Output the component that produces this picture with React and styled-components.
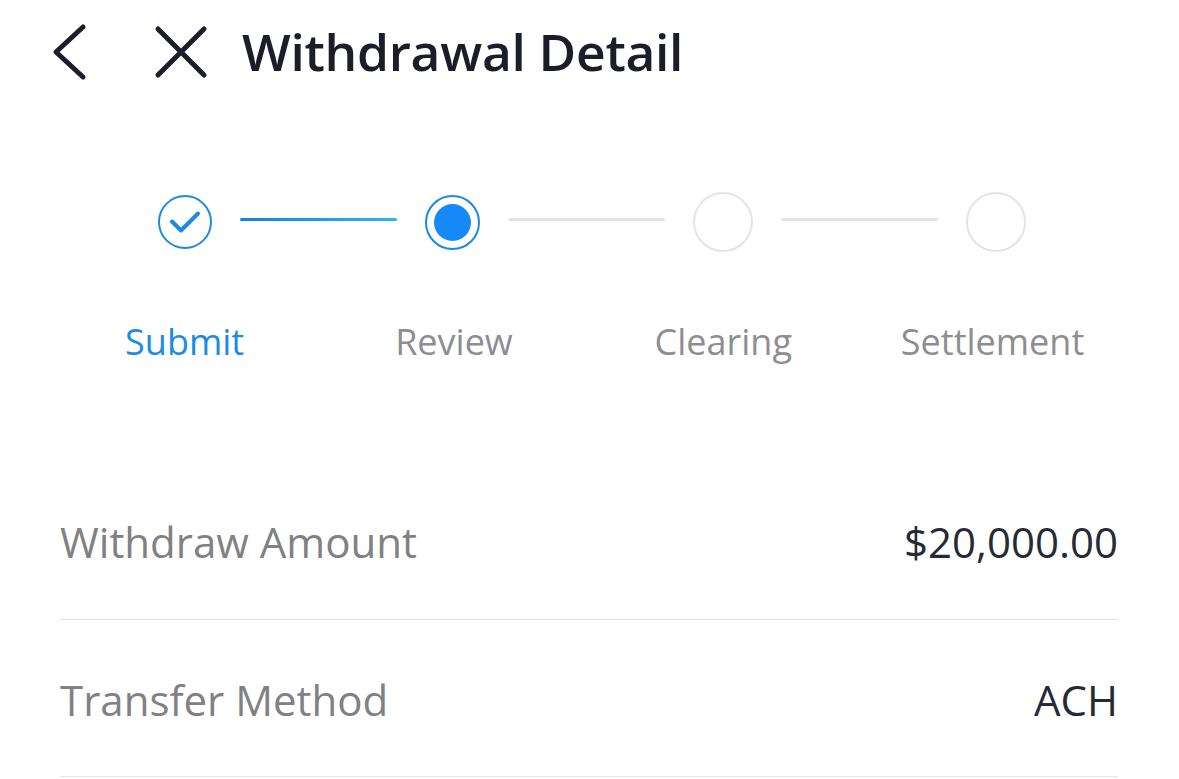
import React from 'react';
import styled, { createGlobalStyle } from 'styled-components';

const GlobalStyle = createGlobalStyle`
  html, body {
    margin: 0;
    padding: 0;
    background: #fff;
  }
  body {
    font-family: "Open Sans", "Noto Sans", sans-serif;
    -webkit-font-smoothing: antialiased;
  }
`;

const Page = styled.div`
  width: 1179px;
  height: 779px;
  overflow: hidden;
  background: #fff;
`;

const Header = styled.header`
  display: flex;
  align-items: center;
  height: 104px;
  padding-left: 51px;
`;

const IconButton = styled.button`
  display: flex;
  align-items: center;
  justify-content: center;
  padding: 0;
  margin: 0 ${(p) => p.gap}px 0 0;
  border: none;
  background: none;
  color: #1b1e29;
`;

const Title = styled.h1`
  margin: 0;
  font-size: 51.5px;
  font-weight: 600;
  line-height: 1.2;
  color: #1b1e29;
  letter-spacing: -0.3px;
`;

const Track = styled.div`
  display: flex;
  align-items: center;
  height: 60px;
  margin-top: 88px;
  padding-left: 158px;
`;

const Circle = styled.div`
  box-sizing: border-box;
  flex: none;
  display: flex;
  align-items: center;
  justify-content: center;
  width: ${(p) => p.size}px;
  height: ${(p) => p.size}px;
  border-radius: 50%;
  border: 2.5px solid ${(p) => (p.state === 'todo' ? '#e3e3ec' : '#1e88e5')};
  background: #fff;
`;

const Dot = styled.div`
  width: 37px;
  height: 37px;
  border-radius: 50%;
  background: #1489f7;
`;

const Connector = styled.div`
  flex: none;
  width: 157px;
  height: 3px;
  margin: 0 28px 5px;
  border-radius: 2px;
  background: ${(p) =>
    p.done ? 'linear-gradient(90deg, #1a7fdf, #2bb7e9)' : '#e2e2ec'};
`;

const Labels = styled.div`
  display: grid;
  grid-template-columns: repeat(4, 269.3px);
  margin-top: 68px;
  padding-left: 50px;
`;

const Label = styled.div`
  text-align: center;
  font-size: 36px;
  line-height: 1.2;
  color: ${(p) => (p.active ? '#1a8ce6' : '#8e8e92')};
`;

const List = styled.div`
  margin: 99px 61px 0 60px;
`;

const Row = styled.div`
  display: flex;
  justify-content: space-between;
  align-items: baseline;
  padding: 55px 0 51px;
  border-bottom: 1.5px solid #e4e4ea;
  font-size: 42px;
  line-height: 1.2;
`;

const RowLabel = styled.span`
  color: #818185;
`;

const RowValue = styled.span`
  color: #262a36;
`;

const BackIcon = () => (
  <svg width="36" height="58" viewBox="0 0 36 58" fill="none">
    <path
      d="M32 4 L5 29 L32 54"
      stroke="currentColor"
      strokeWidth="5"
      strokeLinecap="round"
      strokeLinejoin="round"
    />
  </svg>
);

const CloseIcon = () => (
  <svg width="56" height="56" viewBox="0 0 56 56" fill="none">
    <path
      d="M5 5 L51 51 M51 5 L5 51"
      stroke="currentColor"
      strokeWidth="5"
      strokeLinecap="round"
    />
  </svg>
);

const CheckIcon = () => (
  <svg width="32" height="24" viewBox="0 0 32 24" fill="none">
    <path
      d="M3 11.5 L12 20.5 L29 3.5"
      stroke="#1e88e5"
      strokeWidth="4"
      strokeLinecap="round"
      strokeLinejoin="round"
    />
  </svg>
);

const steps = ['Submit', 'Review', 'Clearing', 'Settlement'];

const rows = [
  { label: 'Withdraw Amount', value: '$20,000.00' },
  { label: 'Transfer Method', value: 'ACH' },
];

export default function App() {
  return (
    <Page>
      <GlobalStyle />
      <Header>
        <IconButton gap={66} aria-label="Back">
          <BackIcon />
        </IconButton>
        <IconButton gap={33} aria-label="Close">
          <CloseIcon />
        </IconButton>
        <Title>Withdrawal Detail</Title>
      </Header>

      <Track>
        <Circle size={54} state="done">
          <CheckIcon />
        </Circle>
        <Connector done />
        <Circle size={55} state="current">
          <Dot />
        </Circle>
        <Connector />
        <Circle size={60} state="todo" />
        <Connector />
        <Circle size={60} state="todo" />
      </Track>

      <Labels>
        {steps.map((s, i) => (
          <Label key={s} active={i === 0}>
            {s}
          </Label>
        ))}
      </Labels>

      <List>
        {rows.map((r) => (
          <Row key={r.label}>
            <RowLabel>{r.label}</RowLabel>
            <RowValue>{r.value}</RowValue>
          </Row>
        ))}
      </List>
    </Page>
  );
}
